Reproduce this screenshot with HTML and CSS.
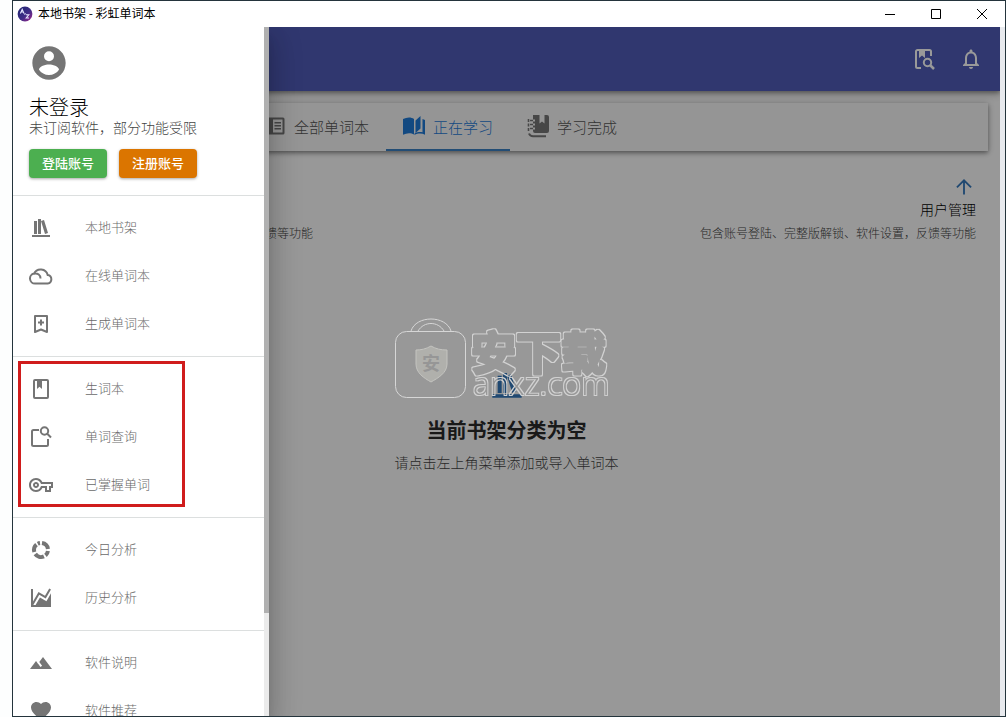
FILE: index.html
```html
<!DOCTYPE html>
<html lang="zh-CN">
<head>
<meta charset="utf-8">
<title>本地书架 - 彩虹单词本</title>
<link rel="stylesheet" href="styles.css">
</head>
<body>
<div class="window">
  <header class="titlebar">
    <svg class="logo" viewBox="0 0 16 16" aria-hidden="true">
      <defs><linearGradient id="lg" x1="0" y1="0" x2="1" y2="1"><stop offset="0" stop-color="#1d2470"/><stop offset=".55" stop-color="#3d2d86"/><stop offset="1" stop-color="#a8288c"/></linearGradient></defs>
      <circle cx="8" cy="8" r="7.4" fill="url(#lg)"/>
      <path d="M3.4 7.5L5.2 3.4L7 7.5M4.2 6H6.3M9 8.8H11.8L9.2 12H12M7.4 8.5l1.2-1" fill="none" stroke="#e4e6ff" stroke-width="1.1"/>
    </svg>
    <span class="title">本地书架 - 彩虹单词本</span>
    <div class="controls">
      <button type="button" aria-label="最小化"><svg viewBox="0 0 12 12"><path d="M1 6.5H11"/></svg></button>
      <button type="button" aria-label="最大化"><svg viewBox="0 0 12 12"><path d="M1.500 1.500H10.500V10.500H1.500Z"/></svg></button>
      <button type="button" aria-label="关闭"><svg viewBox="0 0 12 12"><path d="M1 1L11 11M11 1L1 11"/></svg></button>
    </div>
  </header>

  <div class="client">
    <main class="page">
      <div class="appbar">
        <button type="button" aria-label="查询"><svg class="icon" viewBox="0 0 24 24"><g fill="none" stroke="currentColor" stroke-width="2"><path d="M9 21H5.500A1.500 1.500 0 0 1 4 19.500V4.500A1.500 1.500 0 0 1 5.500 3H17.500A1.500 1.500 0 0 1 19 4.500V9"/><circle cx="15.500" cy="15.500" r="3.700"/><path d="M18 18L22 22" stroke-width="2.500"/></g><path d="M7 3H13V11L10 8.500L7 11Z"/></svg></button>
        <button type="button" aria-label="通知"><svg class="icon" viewBox="0 0 24 24"><path d="M12 22c1.100 0 2-.9 2-2h-4c0 1.100.9 2 2 2zm6-6v-5c0-3.070-1.630-5.640-4.500-6.320V4c0-.83-.67-1.500-1.500-1.500s-1.500.67-1.500 1.500v.68C7.640 5.360 6 7.920 6 11v5l-2 2v1h16v-1l-2-2zm-2 1H8v-6c0-2.480 1.510-4.500 4-4.500s4 2.020 4 4.500v6z"/></svg></button>
      </div>
      <nav class="tabs">
        <button type="button" class="tab"><svg class="icon" viewBox="0 0 24 24"><path fill-rule="evenodd" d="M3 3.500H20A1.500 1.500 0 0 1 21.500 5V19A1.500 1.500 0 0 1 20 20.500H3ZM10 5.500V18.500H19.500V5.500ZM11.500 8H18V9.500H11.500ZM11.500 11H18V12.500H11.500ZM11.500 14H18V15.500H11.500Z"/></svg>全部单词本</button>
        <button type="button" class="tab active"><svg class="icon" viewBox="0 0 24 24"><path d="M1 5C3 4 5 3.500 7 3.500S10.500 4 12 5V20.500C10.500 19.500 9 19.200 7 19.200S3 19.700 1 20.700ZM13.500 6.500L18.500 2V14.500L13.500 19ZM20.500 5L23 6V20.700C20 19.200 16 19 12.500 21V19.500C15.500 17.800 18 17.700 20.500 18.200Z"/></svg>正在学习</button>
        <button type="button" class="tab"><svg class="icon" viewBox="0 0 24 24"><path d="M7 1H13.500V9.500L16 7.500L18.500 9.500V1H21A2 2 0 0 1 23 3V17A2 2 0 0 1 21 19H9A2 2 0 0 1 7 17V15.500H9V13.500H7V11.500H9V9.500H7V7.500H9V5.500H7Z"/><g fill="none" stroke="currentColor" stroke-width="1.600"><path d="M4 6.500H7M4 10.500H7M4 14.500H7"/><path d="M2.500 5V18" stroke-dasharray="3 1.500"/><path d="M3 19.500Q4 22.300 7 22.300H20" stroke-width="2"/></g></svg>学习完成</button>
      </nav>
      <section class="hints">
        <div class="hint left"><p>反馈等功能</p></div>
        <div class="hint right">
          <svg class="icon arrow" viewBox="0 0 24 24"><path d="M12 21V4M3.500 12.500L12 4L20.500 12.500" fill="none" stroke="currentColor" stroke-width="2.200"/></svg>
          <h3>用户管理</h3>
          <p>包含账号登陆、完整版解锁、软件设置，反馈等功能</p>
        </div>
      </section>
      <section class="empty">
        <svg class="shelf" viewBox="0 0 24 24"><path d="M9 3V18H12V3H9M12 5L16 18L19 17L15 4L12 5M5 5V18H8V5H5M1 19V21.500H23V19H1Z"/></svg>
        <h2>当前书架分类为空</h2>
        <p>请点击左上角菜单添加或导入单词本</p>
      </section>
    </main>
    <div class="backdrop"></div>
    <svg class="watermark" viewBox="0 0 216 82">
      <defs>
        <filter id="ring" x="-5%" y="-20%" width="110%" height="140%">
          <feMorphology in="SourceGraphic" operator="dilate" radius="1" result="wide"/>
          <feComposite in="wide" in2="SourceGraphic" operator="out"/>
        </filter>
      </defs>
      <g fill="none" stroke="#d6d6d6" stroke-width="1">
        <rect x="1.500" y="14.500" width="70" height="66" rx="11"/>
        <path d="M17 14C22 -2 52 -2 57 14M24 14C30 4 44 4 50 14"/>
      </g>
      <path d="M37 29C32 32 27 33 22 33V47C22 56 30 61 37 65C44 61 53 56 53 47V33C47 33 42 32 37 29Z" fill="#b0b0ac" stroke="#c4c4c0"/>
      <text class="wm-badge" x="37" y="53" text-anchor="middle">安</text>
      <text class="wm-name" x="77" y="53" filter="url(#ring)">安下载</text>
      <text class="wm-site" x="79" y="78" filter="url(#ring)">anxz.com</text>
    </svg>
    <aside class="drawer">
      <div class="drawer-body">
        <section class="profile">
          <svg class="avatar" viewBox="0 0 24 24"><path d="M12,19.200C9.500,19.200 7.290,17.920 6,16C6.030,14 10,12.900 12,12.900C14,12.900 17.970,14 18,16C16.710,17.920 14.500,19.200 12,19.200M12,5A3,3 0 0,1 15,8A3,3 0 0,1 12,11A3,3 0 0,1 9,8A3,3 0 0,1 12,5M12,2A10,10 0 0,0 2,12A10,10 0 0,0 12,22A10,10 0 0,0 22,12C22,6.470 17.500,2 12,2Z"/></svg>
          <h1>未登录</h1>
          <p>未订阅软件，部分功能受限</p>
          <div class="actions">
            <button type="button" class="btn green">登陆账号</button>
            <button type="button" class="btn orange">注册账号</button>
          </div>
        </section>
        <ul class="menu">
          <li><a href="#shelf"><svg class="icon" viewBox="0 0 24 24"><path d="M9 3V18H12V3H9M12 5L16 18L19 17L15 4L12 5M5 5V18H8V5H5M3 19V21H21V19H3Z"/></svg><span>本地书架</span></a></li>
          <li><a href="#online"><svg class="icon" viewBox="0 0 24 24"><path d="M6 19.500A5 5 0 0 1 5 9.600A7.300 7.300 0 0 1 18.700 11A4.300 4.300 0 0 1 18.700 19.500ZM5 9.700C9 9 11.500 11 11.500 14.500" fill="none" stroke="currentColor" stroke-width="2"/></svg><span>在线单词本</span></a></li>
          <li><a href="#create"><svg class="icon" viewBox="0 0 24 24"><path d="M6 4H18V20L12 17.500L6 20ZM12 7.500V13.500M9 10.500H15" fill="none" stroke="currentColor" stroke-width="2" stroke-linejoin="round"/></svg><span>生成单词本</span></a></li>
        </ul>
        <ul class="menu marked">
          <li><a href="#new"><svg class="icon" viewBox="0 0 24 24"><path d="M18,2A2,2 0 0,1 20,4V20A2,2 0 0,1 18,22H6A2,2 0 0,1 4,20V4A2,2 0 0,1 6,2H18M18,4H13V12L10.500,9.750L8,12V4H6V20H18V4Z"/></svg><span>生词本</span></a></li>
          <li><a href="#query"><svg class="icon" viewBox="0 0 24 24"><g fill="none" stroke="currentColor" stroke-width="2"><path d="M10 5H4.500A1.500 1.500 0 0 0 3 6.500V19.500A1.500 1.500 0 0 0 4.500 21H17.500A1.500 1.500 0 0 0 19 19.500V14"/><circle cx="15.500" cy="6" r="3.700"/><path d="M18 8.500L22 12.500"/></g></svg><span>单词查询</span></a></li>
          <li><a href="#known"><svg class="icon" viewBox="0 0 24 24"><path d="M22 19h-6v-4h-2.680c-1.140 2.420-3.600 4-6.320 4-3.860 0-7-3.140-7-7s3.140-7 7-7c2.720 0 5.170 1.580 6.320 4H24v6h-2v4zm-4-2h2v-4h2v-2H11.940l-.23-.67C11.010 8.340 9.110 7 7 7c-2.760 0-5 2.240-5 5s2.240 5 5 5c2.110 0 4.010-1.340 4.710-3.330l.23-.67H18v4zM7 15c-1.650 0-3-1.350-3-3s1.350-3 3-3 3 1.350 3 3-1.350 3-3 3zm0-4c-.55 0-1 .45-1 1s.45 1 1 1 1-.45 1-1-.45-1-1-1z"/></svg><span>已掌握单词</span></a></li>
        </ul>
        <ul class="menu">
          <li><a href="#today"><svg class="icon" viewBox="0 0 24 24"><path d="M13 5.080A7 7 0 0 1 18.930 11M18.930 13A7 7 0 0 1 16.500 17.360M14.900 18.400A7 7 0 0 1 6.270 16M5.330 14A7 7 0 0 1 7.500 6.640M8.800 5.770A7 7 0 0 1 11 5.080" fill="none" stroke="currentColor" stroke-width="4"/></svg><span>今日分析</span></a></li>
          <li><a href="#history"><svg class="icon" viewBox="0 0 24 24"><path d="M17.450,15.180L22,7.310V21H2V3H4V15.540L9.500,6L16,9.780L20.240,2.450L21.970,3.450L16.740,12.500L10.230,8.750L4.310,19H6.570L10.960,11.440L17.450,15.180Z"/></svg><span>历史分析</span></a></li>
        </ul>
        <ul class="menu">
          <li><a href="#about"><svg class="icon" viewBox="0 0 24 24"><path d="M14,6L10.250,11L13.100,14.800L11.500,16C9.810,13.750 7,10 7,10L1,18H23L14,6Z"/></svg><span>软件说明</span></a></li>
          <li><a href="#recommend"><svg class="icon" viewBox="0 0 24 24"><path d="M12 21.350l-1.450-1.320C5.400 15.360 2 12.280 2 8.500 2 5.420 4.420 3 7.500 3c1.740 0 3.410.81 4.500 2.090C13.090 3.810 14.760 3 16.500 3 19.580 3 22 5.420 22 8.500c0 3.780-3.400 6.860-8.550 11.540L12 21.350z"/></svg><span>软件推荐</span></a></li>
        </ul>
      </div>
      <div class="scroll"><div class="thumb"></div></div>
    </aside>
  </div>
</div>
</body>
</html>
```
FILE: styles.css
```css
* { box-sizing: border-box; }
body {
  margin: 0;
  padding-left: 12px;
  background: #fdfefe;
  font-family: "Noto Sans CJK SC", sans-serif;
  font-weight: 300;
}
h1, h2, h3, p, ul { margin: 0; padding: 0; }
button { font-family: inherit; color: inherit; border: 0; background: none; padding: 0; cursor: pointer; }
svg { display: block; flex: none; }
.icon { width: 24px; height: 24px; fill: currentColor; }

.window {
  display: flex;
  flex-direction: column;
  height: 100vh;
  border: 1px solid #24343c;
  background: #fff;
  overflow: hidden;
}
.titlebar { display: flex; align-items: center; height: 26px; flex: none; padding-left: 4px; }
.logo { width: 16px; height: 16px; }
.title { flex: 1; margin-left: 5px; padding-bottom: 2px; font-size: 12px; font-weight: 400; line-height: 24px; color: #000; }
.controls { display: flex; }
.controls button { display: grid; place-items: center; width: 46px; height: 26px; }
.controls svg { width: 12px; height: 12px; fill: none; stroke: #000; }

.client { position: relative; flex: 1; min-height: 0; padding-right: 5px; background: #e8eaee; }
.page { height: 100%; background: #fefefe; overflow: hidden; }
.backdrop {
  position: absolute;
  inset: 0 5px 0 0;
  background: rgba(0, 0, 0, .4);
}
.appbar {
  display: flex;
  justify-content: flex-end;
  align-items: center;
  gap: 23px;
  height: 64px;
  padding: 0 17px;
  background: #505dba;
  color: #fff;
  box-shadow: 0 2px 4px rgba(0, 0, 0, .3), 0 4px 8px rgba(0, 0, 0, .2);
}
.tabs {
  display: flex;
  margin: 12px;
  padding-left: 222px;
  background: #f9f9f9;
  box-shadow: 0 2px 4px rgba(0, 0, 0, .35), 0 1px 8px rgba(0, 0, 0, .2);
}
.tab {
  display: flex;
  align-items: center;
  gap: 7px;
  height: 48px;
  padding: 0 17px 0 16px;
  border-bottom: 2px solid transparent;
  font-size: 15px;
  font-weight: 300;
  color: #555;
}
.tab.active { color: #1f7ad8; border-color: #3b80c4; }
.tab:not(.active) .icon { color: #777; }

.hints { display: flex; justify-content: space-between; align-items: flex-end; padding: 12px 24px; }
.hint p { font-size: 12px; line-height: 20px; color: #444; white-space: nowrap; }
.hint.left { padding-left: 216px; }
.hint.right { display: flex; flex-direction: column; align-items: flex-end; }
.arrow { width: 20px; height: 24px; margin-right: 2px; color: #3478bd; }
.hint h3 { font-size: 14px; font-weight: 300; line-height: 20px; margin-bottom: 4px; color: #000; }

.empty { display: flex; flex-direction: column; align-items: center; margin-top: 112px; }
.shelf { width: 32px; height: 36px; fill: #3478bd; }
.empty h2 { font-size: 20px; font-weight: 700; line-height: 28px; margin-top: 13px; color: #2a2a2a; }
.empty p { font-size: 14px; line-height: 20px; margin-top: 8px; color: #444; }

.watermark { position: absolute; left: 381px; top: 290px; width: 216px; height: 82px; }
.watermark text { fill: #d2d2d2; stroke: #d2d2d2; stroke-linejoin: round; }
.wm-name { font-size: 45px; font-weight: 700; stroke-width: 3px; }
.watermark .wm-site { font-family: "Open Sans", sans-serif; font-size: 32px; stroke: none; }
.watermark .wm-badge { font-size: 18px; font-weight: 700; fill: #969696; stroke: none; }

.drawer {
  position: absolute;
  inset: 0 auto 0 0;
  display: flex;
  width: 256px;
  background: #fff;
  box-shadow: 0 8px 10px -5px rgba(0, 0, 0, .2), 0 16px 24px 2px rgba(0, 0, 0, .14), 0 6px 30px 5px rgba(0, 0, 0, .12);
  clip-path: inset(0 -48px 0 0);
}
.drawer-body { flex: 1; overflow: hidden; }
.scroll { width: 5px; background: #ebebeb; }
.thumb { height: 85%; background: #b0b0b0; }
.profile { padding: 16px 16px 17px; }
.avatar { width: 40px; height: 40px; fill: #757575; }
.profile h1 { margin-top: 12px; font-size: 20px; font-weight: 300; line-height: 24px; color: #000; }
.profile p { font-size: 14px; line-height: 16px; color: #444; }
.actions { display: flex; gap: 12px; margin-top: 14px; }
.btn {
  height: 29px;
  padding: 0 13px 2px;
  border-radius: 4px;
  font-size: 13px;
  font-weight: 500;
  color: #fff;
  box-shadow: 0 1px 3px rgba(0, 0, 0, .35);
}
.green { background: #4caf50; }
.orange { background: #db7500; }
.menu { position: relative; list-style: none; padding: 8px 0; border-top: 1px solid #dcdfdf; }
.menu a {
  display: flex;
  align-items: center;
  gap: 32px;
  height: 48px;
  padding: 0 16px;
  font-size: 13px;
  line-height: 20px;
  color: #6a6a6a;
  text-decoration: none;
}
.menu span { padding-bottom: 3px; }
.menu .icon { color: #757575; }
.marked::after {
  content: "";
  position: absolute;
  inset: 4px 79px 10px 5px;
  border: 3px solid #d01c1c;
  pointer-events: none;
}
```
